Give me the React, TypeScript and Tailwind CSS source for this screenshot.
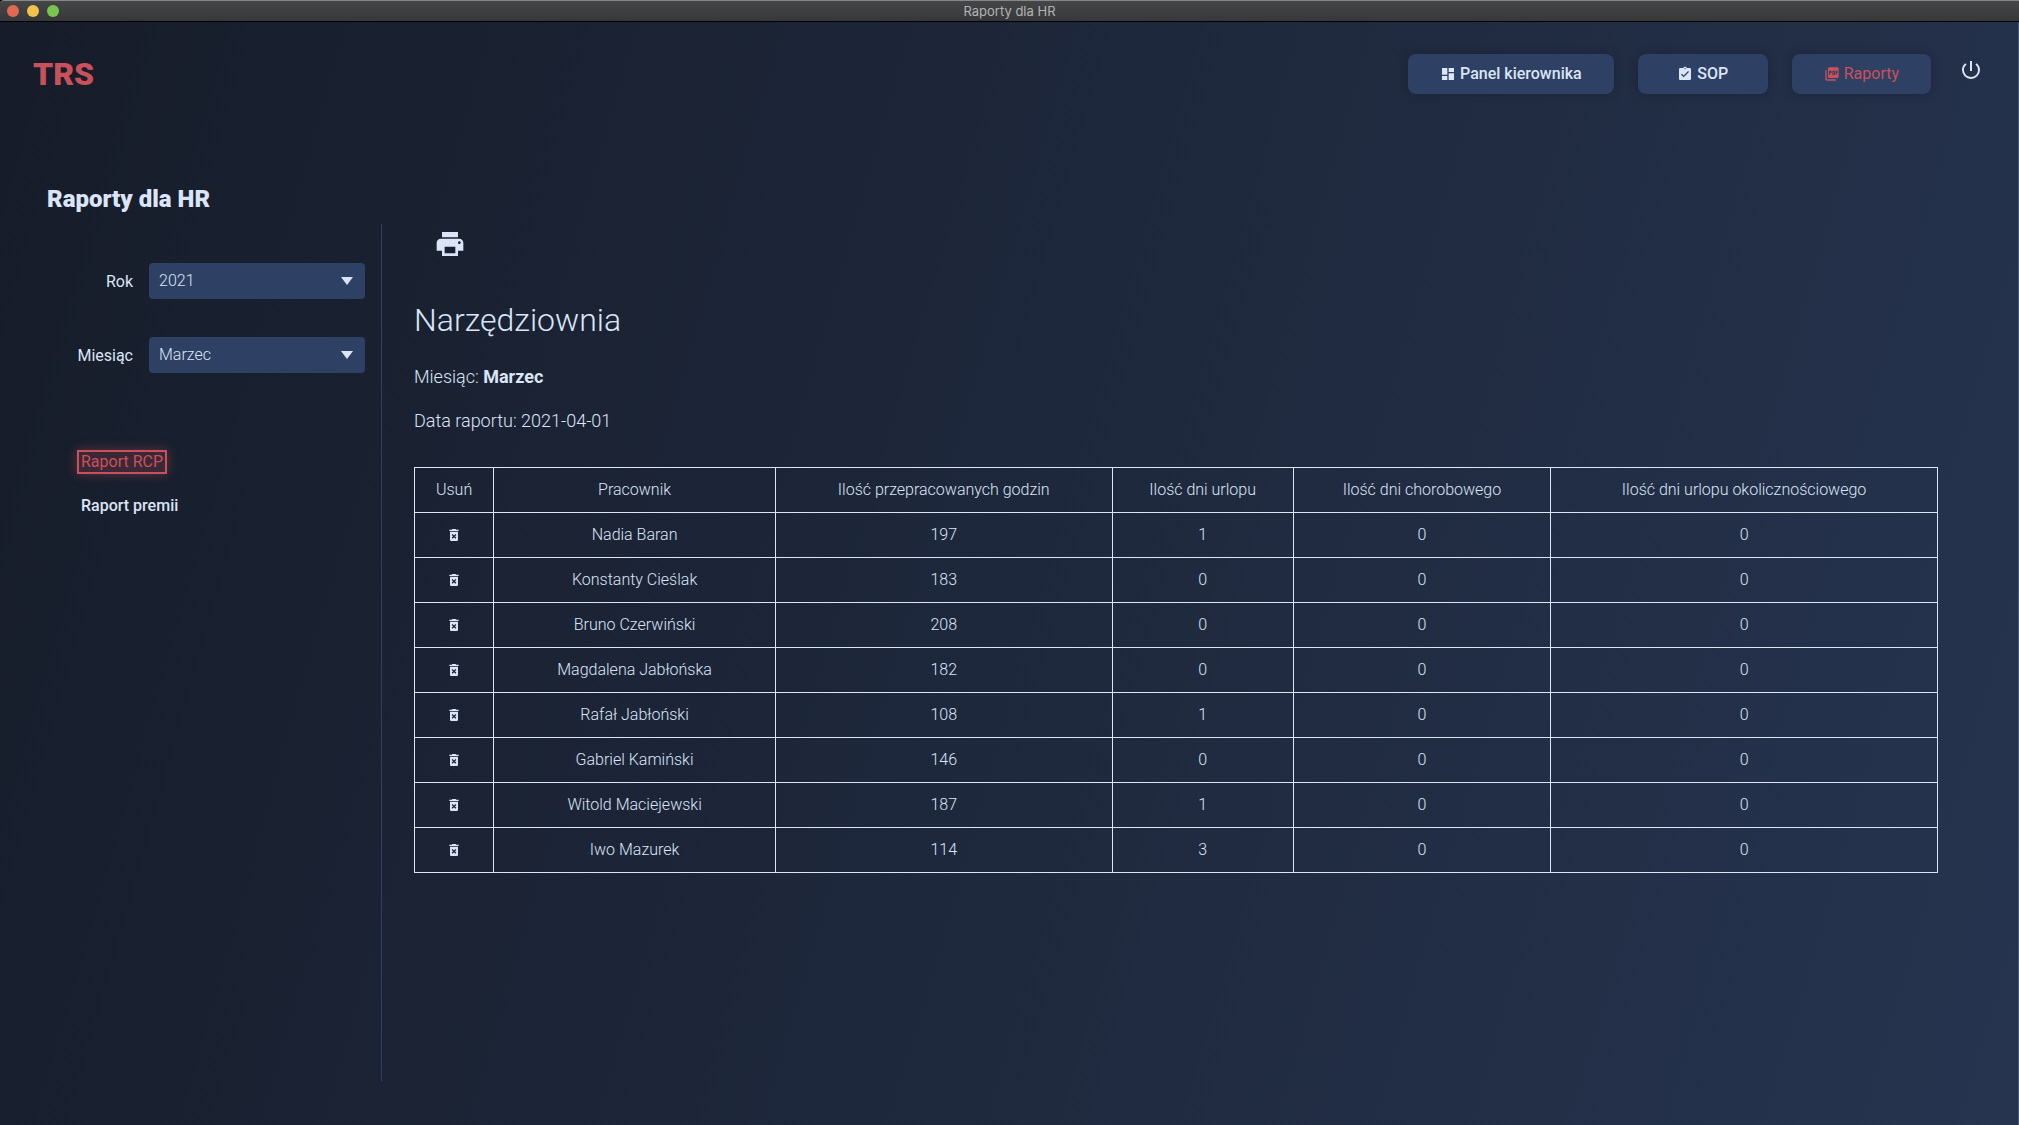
import type { ReactNode } from "react";
import type { IconType } from "react-icons";
import {
  MdAssignmentTurnedIn,
  MdDashboard,
  MdDeleteForever,
  MdPictureAsPdf,
  MdPowerSettingsNew,
  MdPrint,
} from "react-icons/md";

type Row = { name: string; hours: number; leave: number; sick: number; special: number };

const rows: Row[] = [
  { name: "Nadia Baran", hours: 197, leave: 1, sick: 0, special: 0 },
  { name: "Konstanty Cieślak", hours: 183, leave: 0, sick: 0, special: 0 },
  { name: "Bruno Czerwiński", hours: 208, leave: 0, sick: 0, special: 0 },
  { name: "Magdalena Jabłońska", hours: 182, leave: 0, sick: 0, special: 0 },
  { name: "Rafał Jabłoński", hours: 108, leave: 1, sick: 0, special: 0 },
  { name: "Gabriel Kamiński", hours: 146, leave: 0, sick: 0, special: 0 },
  { name: "Witold Maciejewski", hours: 187, leave: 1, sick: 0, special: 0 },
  { name: "Iwo Mazurek", hours: 114, leave: 3, sick: 0, special: 0 },
];

const columns = [
  { label: "Usuń", width: "w-[5.2%]" },
  { label: "Pracownik", width: "w-[18.5%]" },
  { label: "Ilość przepracowanych godzin", width: "w-[22.1%]" },
  { label: "Ilość dni urlopu", width: "w-[11.9%]" },
  { label: "Ilość dni chorobowego", width: "w-[16.9%]" },
  { label: "Ilość dni urlopu okolicznościowego", width: "w-[25.4%]" },
];

const months = [
  "Styczeń", "Luty", "Marzec", "Kwiecień", "Maj", "Czerwiec",
  "Lipiec", "Sierpień", "Wrzesień", "Październik", "Listopad", "Grudzień",
];

function TitleBar() {
  return (
    <div className="grid h-[22px] grid-cols-[1fr_auto_1fr] items-center rounded-tl border-t border-b border-t-[#868787] border-b-black bg-linear-to-b from-[#454647] to-[#373839] px-[7px]">
      <div className="flex gap-2">
        <button type="button" aria-label="Zamknij" className="size-3 rounded-full bg-[#e06855]" />
        <button type="button" aria-label="Minimalizuj" className="size-3 rounded-full bg-[#f2c04b]" />
        <button type="button" aria-label="Maksymalizuj" className="size-3 rounded-full bg-[#79c552]" />
      </div>
      <span className="font-[Inter] text-[13px] leading-5 text-[#b3b4b4]">Raporty dla HR</span>
    </div>
  );
}

function NavButton({ icon: Icon, active, children }: { icon: IconType; active?: boolean; children: ReactNode }) {
  return (
    <button
      type="button"
      className={`flex h-10 min-w-[130px] items-center justify-center gap-1 rounded-lg bg-[#2e4063] px-8 text-base shadow-[0_0_10px_rgba(22,26,40,0.45)] ${
        active ? "font-normal text-[#c9515c]" : "font-medium text-[#dbe5f7]"
      }`}
    >
      <Icon className="size-4" />
      {children}
    </button>
  );
}

function SelectField({ id, label, value, options }: { id: string; label: string; value: string; options: string[] }) {
  return (
    <div className="flex items-center justify-end gap-4">
      <label htmlFor={id} className="pt-0.5 text-base leading-6">
        {label}
      </label>
      <div className="relative w-[216px]">
        <select
          id={id}
          defaultValue={value}
          className="block h-9 w-full appearance-none rounded bg-[#2e4063] px-2.5 text-base font-light text-[#dbe5f7]"
        >
          {options.map((o) => (
            <option key={o}>{o}</option>
          ))}
        </select>
        <svg viewBox="0 0 12 8" className="pointer-events-none absolute top-3.5 right-3 h-2 w-3 fill-[#dbe5f7]" aria-hidden="true">
          <path d="M0 0h12L6 8z" />
        </svg>
      </div>
    </div>
  );
}

function Sidebar() {
  return (
    <aside className="w-[382px] shrink-0 border-r border-[#2e4063] pt-[39px] pr-4">
      <div className="flex flex-col gap-[38px]">
        <SelectField id="year" label="Rok" value="2021" options={["2019", "2020", "2021"]} />
        <SelectField id="month" label="Miesiąc" value="Marzec" options={months} />
      </div>
      <nav className="mt-[77px] ml-[77px] flex flex-col items-start gap-5">
        <a
          href="#rcp"
          className="border-2 border-[#c9515c] bg-[#c9515c]/20 px-0.5 text-base leading-5 text-[#c9515c] shadow-[0_0_12px_rgba(201,81,92,0.4)]"
        >
          Raport RCP
        </a>
        <a href="#premie" className="border-2 border-transparent px-0.5 text-base leading-5 font-medium">
          Raport premii
        </a>
      </nav>
    </aside>
  );
}

function ReportTable() {
  const cell = "h-[45px] border border-[#dbe5f7] p-0 text-center font-light";
  return (
    <table className="mt-[34px] w-full table-fixed border-collapse text-base">
      <thead>
        <tr>
          {columns.map((c) => (
            <th key={c.label} scope="col" className={`${cell} ${c.width}`}>
              {c.label}
            </th>
          ))}
        </tr>
      </thead>
      <tbody>
        {rows.map((r) => (
          <tr key={r.name}>
            <td className={cell}>
              <button type="button" aria-label={`Usuń ${r.name}`} className="mx-auto block">
                <MdDeleteForever className="size-4" />
              </button>
            </td>
            <td className={cell}>{r.name}</td>
            <td className={cell}>{r.hours}</td>
            <td className={cell}>{r.leave}</td>
            <td className={cell}>{r.sick}</td>
            <td className={cell}>{r.special}</td>
          </tr>
        ))}
      </tbody>
    </table>
  );
}

export default function App() {
  return (
    <div className="flex min-h-screen flex-col bg-black font-[Roboto,sans-serif] text-[#dbe5f7]">
      <TitleBar />
      <div className="flex flex-1 flex-col border-r border-[#4a5672] bg-linear-[106deg] from-[#161c29] to-[#26344f]">
        <header className="flex items-start justify-between pt-8 pr-[35px] pl-[33px]">
          <div className="text-[32px] leading-10 font-black text-[#c9515c]">TRS</div>
          <nav className="flex gap-6">
            <NavButton icon={MdDashboard}>Panel kierownika</NavButton>
            <NavButton icon={MdAssignmentTurnedIn}>SOP</NavButton>
            <NavButton icon={MdPictureAsPdf} active>
              Raporty
            </NavButton>
            <button type="button" aria-label="Wyloguj" className="ml-1 h-8">
              <MdPowerSettingsNew className="size-6" />
            </button>
          </nav>
        </header>
        <h1 className="mt-[89px] ml-[47px] text-2xl leading-8 font-black">Raporty dla HR</h1>
        <div className="mt-[9px] mb-11 flex flex-1">
          <Sidebar />
          <main className="flex-1 pr-20 pl-8">
            <button type="button" aria-label="Drukuj" className="mt-1 ml-5 block">
              <MdPrint className="size-8" />
            </button>
            <h2 className="mt-10 text-[32px] leading-10 font-light">Narzędziownia</h2>
            <p className="mt-[25px] text-lg leading-6 font-light">
              Miesiąc: <strong className="font-bold">Marzec</strong>
            </p>
            <p className="mt-5 text-lg leading-6 font-light">Data raportu: 2021-04-01</p>
            <ReportTable />
          </main>
        </div>
      </div>
    </div>
  );
}
